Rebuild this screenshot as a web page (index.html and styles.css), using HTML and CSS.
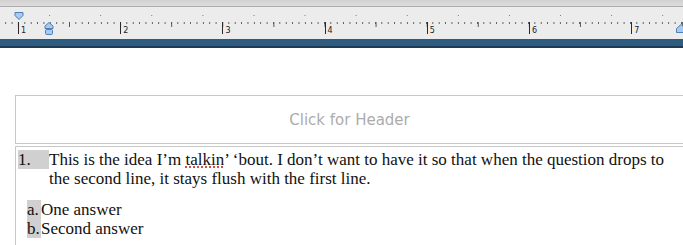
FILE: index.html
```html
<!DOCTYPE html>
<html lang="en">

<head>
    <meta charset="UTF-8">
    <meta name="viewport" content="width=device-width, initial-scale=1.0">
    <title>Document - Print Layout</title>
    <link rel="stylesheet" href="styles.css">
</head>

<body>
    <div class="toolbar"></div>

    <div class="ruler">
        <div class="ruler-dots"></div>
        <div class="ruler-scale">
            <span class="inch">1</span>
            <span class="inch">2</span>
            <span class="inch">3</span>
            <span class="inch">4</span>
            <span class="inch">5</span>
            <span class="inch">6</span>
            <span class="inch">7</span>
        </div>

        <!-- indent markers -->
        <svg class="marker marker-first" width="10" height="8" viewBox="0 0 10 8">
            <path d="M1 0.5 H9 V3.5 L5 7.5 L1 3.5 Z" fill="#a9c9ee" stroke="#4d7fb8" stroke-width="1" />
        </svg>
        <svg class="marker marker-hanging" width="10" height="13" viewBox="0 0 10 13">
            <path d="M5 0.5 L9 4 V6.5 H1 V4 Z" fill="#a9c9ee" stroke="#4d7fb8" stroke-width="1" />
            <rect x="1.5" y="7.5" width="7" height="5" rx="1" fill="#a9c9ee" stroke="#4d7fb8" stroke-width="1" />
        </svg>
        <svg class="marker marker-right" width="10" height="9" viewBox="0 0 10 9">
            <path d="M5 0.5 L9.5 4.5 V8.5 H0.5 V4.5 Z" fill="#a9c9ee" stroke="#4d7fb8" stroke-width="1" />
        </svg>
    </div>

    <div class="window-bar"></div>

    <div class="page">
        <div class="header-box">Click for Header</div>

        <div class="body-box">
            <div class="question">
                <span class="question-num">1.</span>
                <p class="question-text">This is the idea I’m <span class="misspelled">talkin</span>’ ‘bout. I don’t want to have it so that when the question drops to the second line, it stays flush with the first line.</p>
            </div>

            <div class="answers">
                <div class="answer"><span class="answer-letter">a.</span>One answer</div>
                <div class="answer"><span class="answer-letter">b.</span>Second answer</div>
            </div>
        </div>
    </div>
</body>

</html>
```

FILE: styles.css
```css
body,
html {
    margin: 0;
    padding: 0;
    height: 100%;
    background: #ffffff;
    overflow: hidden;
}

/* top toolbar, only its bottom edge is visible */
.toolbar {
    height: 6px;
    background: linear-gradient(to bottom, #d2d2d2, #dcdcdc);
    border-bottom: 1px solid #adadad;
}

/* ruler */
.ruler {
    height: 32px;
    background: #ececec;
    position: relative;
    overflow: hidden;
}

.ruler-dots {
    height: 1px;
    margin-top: 8px;
    background-image: linear-gradient(to right, #7a7a7a 1px, transparent 1px);
    background-size: 51.1px 1px;
    background-position: -2px 0;
}

.ruler-scale {
    display: flex;
    margin-top: 6px;
    padding-left: 18px;
    height: 12px;
    background-image:
        linear-gradient(to right, #555 1px, transparent 1px),
        linear-gradient(to right, #555 1px, transparent 1px);
    background-size: 6.3875px 2px, 51.1px 5px;
    background-position: 18px 0, 69px 0;
    background-repeat: repeat-x;
}

.inch {
    flex: 0 0 102.2px;
    box-sizing: border-box;
    border-left: 1px solid #2a2a2a;
    padding: 5px 0 0 2px;
    font-family: 'DejaVu Sans', sans-serif;
    font-size: 8px;
    line-height: 7px;
    color: #222;
}

.marker {
    position: absolute;
    display: block;
}

.marker-first {
    left: 14px;
    top: 5px;
}

.marker-hanging {
    left: 44px;
    top: 15px;
}

.marker-right {
    left: 676px;
    top: 17px;
}

.window-bar {
    height: 7px;
    background: #2e5b80;
    border-bottom: 2px solid #1d3a52;
}

/* document page */
.page {
    padding: 47px 0 0 15px;
}

.header-box {
    height: 47px;
    border: 1px solid #c8c8c8;
    border-right: none;
    display: flex;
    align-items: center;
    justify-content: center;
    font-family: 'DejaVu Sans', sans-serif;
    font-size: 15px;
    color: #acacac;
}

.body-box {
    margin-top: 2px;
    border-top: 1px solid #c8c8c8;
    border-left: 1px solid #c8c8c8;
    padding: 3px 0 0 2px;
    height: 95px;
    overflow: hidden;
    font-family: 'Liberation Serif', 'Times New Roman', serif;
    font-size: 17px;
    line-height: 19px;
    color: #111;
}

.question {
    display: flex;
    align-items: flex-start;
    padding-right: 14px;
}

.question-num {
    flex: 0 0 31px;
    background: #d0d0d0;
}

.question-text {
    margin: 0;
}

.misspelled {
    text-decoration: underline dotted #d8262b;
    text-underline-offset: 2px;
}

.answers {
    margin: 12px 0 0 9px;
}

.answer {
    display: flex;
}

.answer-letter {
    flex: 0 0 14px;
    background: #d0d0d0;
}
```
